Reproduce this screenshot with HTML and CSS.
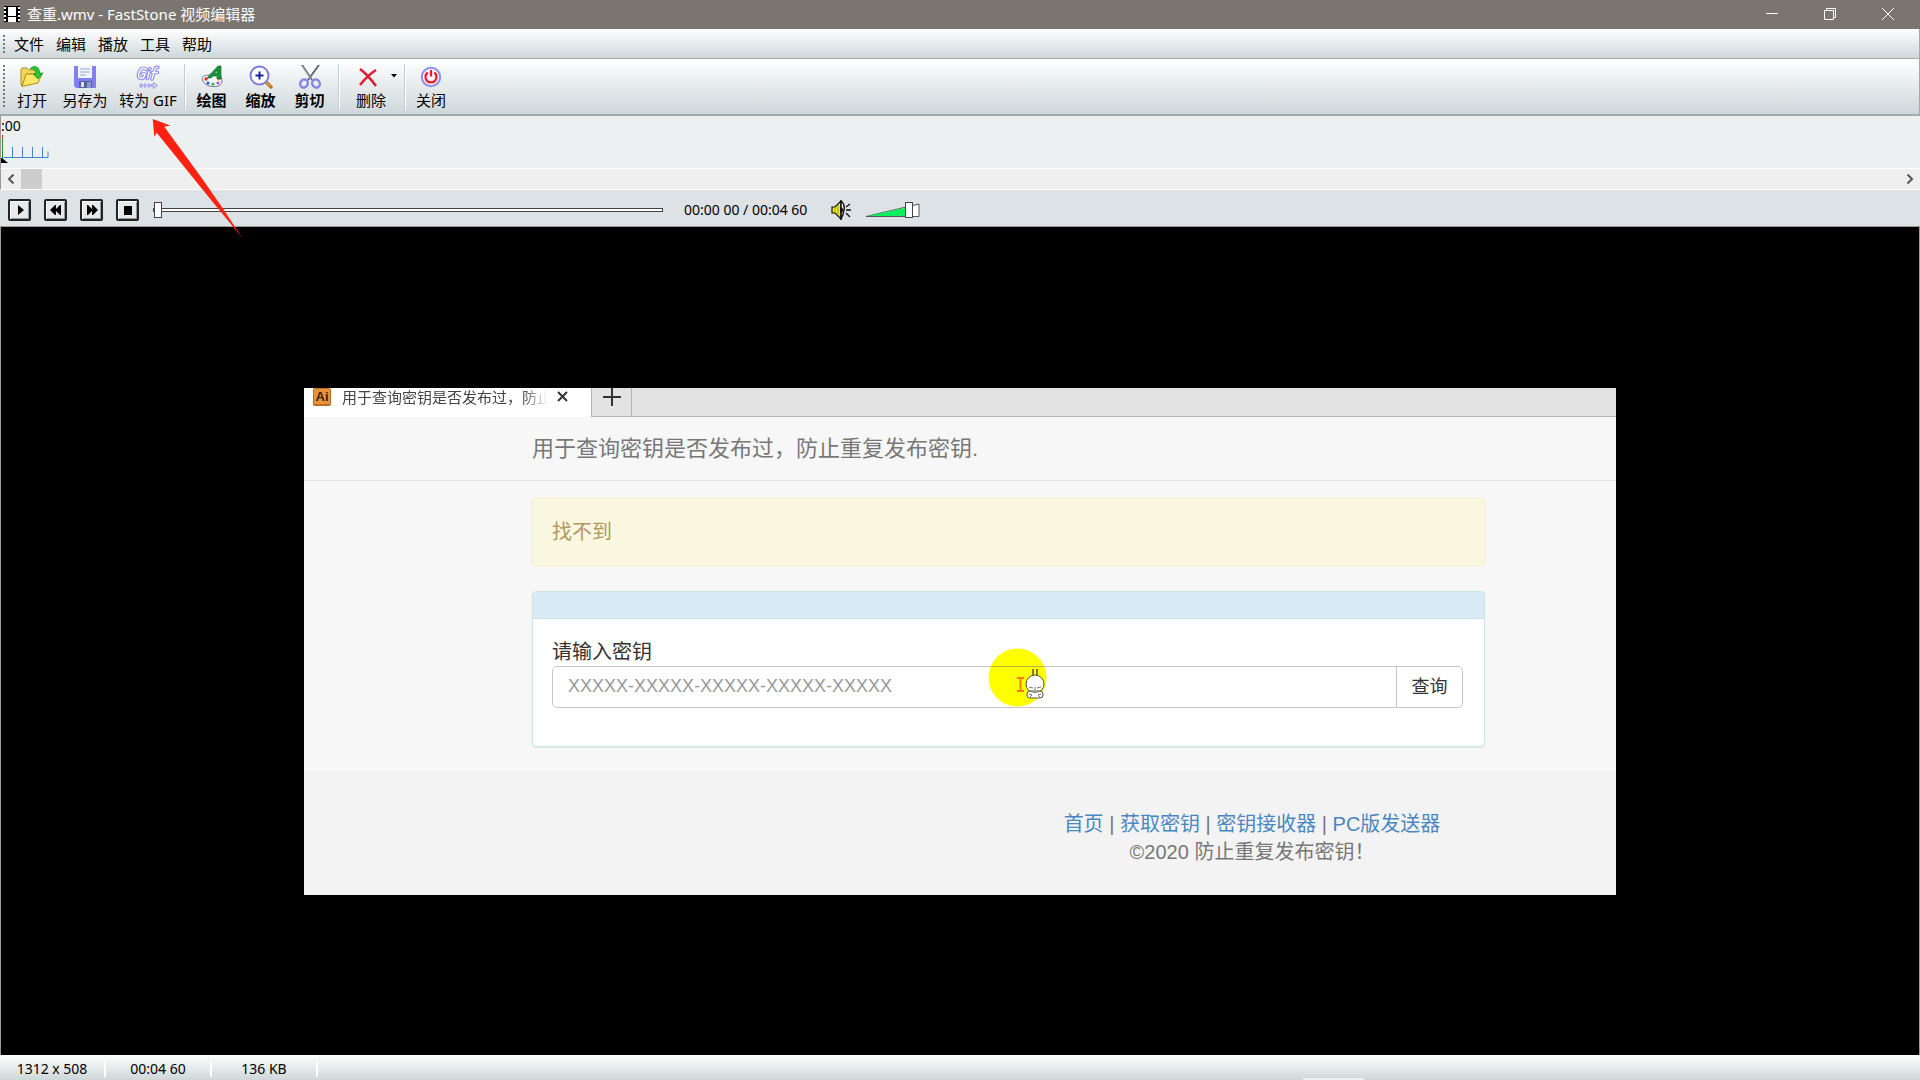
FILE: index.html
```html
<!DOCTYPE html>
<html lang="zh-CN">
<head>
    <meta charset="UTF-8">
    <meta name="viewport" content="width=device-width, initial-scale=1.0">
    <title>查重.wmv - FastStone 视频编辑器</title>
    <link rel="stylesheet" href="styles.css">
</head>
<body>
    <header class="titlebar">
        <svg class="app-icon" width="16" height="16" viewBox="0 0 16 16">
            <path d="M0 0h16v16H0z" fill="#000"/>
            <path d="M4 1h8v9H4zM4 11h8v5H4z" fill="#fff"/>
            <path d="M1 1v15M15 1v15" stroke="#fff" stroke-width="2" stroke-dasharray="2 2"/>
        </svg>
        <h1>查重.wmv - FastStone 视频编辑器</h1>
        <div class="window-buttons">
            <button type="button" aria-label="最小化"><svg width="12" height="12" viewBox="0 0 12 12"><path d="M0 5.5h12"/></svg></button>
            <button type="button" aria-label="还原"><svg width="12" height="12" viewBox="0 0 12 12"><path d="M.5 2.5h9v9h-9zM2.5 2V.5h9v9H10"/></svg></button>
            <button type="button" aria-label="关闭窗口"><svg width="12" height="12" viewBox="0 0 12 12"><path d="M0 0l12 12M12 0L0 12"/></svg></button>
        </div>
    </header>

    <nav class="menubar">
        <button type="button">文件</button>
        <button type="button">编辑</button>
        <button type="button">播放</button>
        <button type="button">工具</button>
        <button type="button">帮助</button>
    </nav>

    <div class="toolbar">
        <button type="button" class="tool tool-open">
            <svg width="24" height="24" viewBox="0 0 24 24">
                <path d="M1 5l1-2h5l2 2h8v4H7L2 21l-1-2z" fill="#f3d75b" stroke="#a98a1c"/>
                <path d="M2 21.500L6 9h16l-4 9z" fill="#ffe566" stroke="#b08d18"/>
                <path d="M10 4c4-5 10-2 9.500 4H23l-5 6-5-5h2.500C16 5 13 3 10 4z" fill="#1fc934" stroke="#158a20" stroke-width=".7"/>
            </svg>
            打开
        </button>
        <button type="button" class="tool tool-save">
            <svg width="24" height="24" viewBox="0 0 24 24">
                <path d="M1 1h22v22H3l-2-2z" fill="#8080ee"/>
                <path d="M5 1h14v12H5z" fill="#f2f6fc"/>
                <path d="M7 4h10M7 7h10M7 10h6" stroke="#9aa6c4"/>
                <path d="M6 16h13v7H6z" fill="#59639e"/>
                <path d="M8 17h3v5H8z" fill="#d8def4"/>
                <path d="M14 17h4v6h-4z" fill="#8d97cc"/>
            </svg>
            另存为
        </button>
        <button type="button" class="tool tool-gif">
            <svg width="24" height="24" viewBox="0 0 24 24">
                <g fill="none" stroke-linecap="round" stroke-linejoin="round">
                    <path d="M10.500 4.500Q5 1 3 7.500Q1 14 6 13.500Q8 13.500 9 9H6.500M13 7l-1.500 6.500M14 3.500v.2M16 14l3-10q.6-2 3-1.500M16.500 7.500h5" stroke="#8b8bf3" stroke-width="3.600"/>
                    <path d="M10.500 4.500Q5 1 3 7.500Q1 14 6 13.500Q8 13.500 9 9H6.500M13 7l-1.500 6.500M14 3.500v.2M16 14l3-10q.6-2 3-1.500M16.500 7.500h5" stroke="#fff" stroke-width="1.400"/>
                </g>
                <path d="M4 19h2v3H4zM8 19h2v3H8zM12 19h2v3h-2zM15.500 19.500h2v-2l4 3-4 3v-2h-2z" fill="#d8d8ff" stroke="#8b8bf3" stroke-width=".8"/>
            </svg>
            转为 GIF
        </button>
        <span class="tool-sep"></span>
        <button type="button" class="tool tool-draw">
            <svg width="24" height="24" viewBox="0 0 24 24">
                <path d="M2 14q0-4 8-4h10q2 2 2 6 0 6-9 5.500Q4 21 2 14z" fill="#f8f8fc" stroke="#77779c"/>
                <circle cx="6" cy="14" r="1.700" fill="#e52b2b"/><circle cx="8" cy="18" r="1.600" fill="#2a55e8"/>
                <circle cx="13" cy="19" r="1.600" fill="#27b943"/><circle cx="18" cy="18" r="1.600" fill="#d447e6"/><circle cx="19" cy="14" r="1.500" fill="#f0a032"/>
                <path d="M7 13L18 1h3v13h-4v-3h-4l-2 2zM14.500 8.500H17V5z" fill="#17963a" fill-rule="evenodd" stroke="#0d5a24" stroke-width=".6"/>
            </svg>
            绘图
        </button>
        <button type="button" class="tool tool-zoom">
            <svg width="24" height="24" viewBox="0 0 24 24">
                <path d="M17 17l5 5" stroke="#bd792b" stroke-width="3.500" stroke-linecap="round"/>
                <path d="M17 17l4 4" stroke="#f2bd66"/>
                <circle cx="10.500" cy="10.500" r="9" fill="#fdfdff" stroke="#7c7cdd" stroke-width="2"/>
                <path d="M6.500 10.500h8M10.500 6.500v8" stroke="#1f2192" stroke-width="2"/>
            </svg>
            缩放
        </button>
        <button type="button" class="tool tool-cut">
            <svg width="24" height="24" viewBox="0 0 24 24">
                <path d="M4 0l10 15M21 0L10 15" stroke="#666b70" stroke-width="2"/>
                <path d="M4 1l9 13" stroke="#c5cbd0" stroke-width=".7"/>
                <g fill="none" stroke="#8585e5" stroke-width="2.400"><ellipse cx="6" cy="18.500" rx="3.700" ry="4.200" transform="rotate(30 6 18.500)"/><ellipse cx="18" cy="18.500" rx="3.700" ry="4.200" transform="rotate(-30 18 18.500)"/></g>
            </svg>
            剪切
        </button>
        <span class="tool-sep"></span>
        <button type="button" class="tool tool-delete">
            <svg width="24" height="24" viewBox="0 0 24 24">
                <path d="M1 4q7 5 16 17M17 5Q9 10 1 20" fill="none" stroke="#e21b35" stroke-width="2.600"/>
            </svg>
            删除
        </button>
        <button type="button" class="drop" aria-label="删除选项"><svg width="6" height="4" viewBox="0 0 6 4"><path d="M0 0h6L3 3.500z"/></svg></button>
        <span class="tool-sep"></span>
        <button type="button" class="tool tool-close">
            <svg width="24" height="24" viewBox="0 0 24 24">
                <circle cx="12" cy="12" r="9.200" fill="#f6f3ff" stroke="#8d8dea" stroke-width="2"/>
                <path d="M8.800 7.500a5.500 5.500 0 1 0 6.400 0M12 5v6.500" fill="none" stroke="#f31a24" stroke-width="2.200"/>
            </svg>
            关闭
        </button>
    </div>

    <section class="timeline">
        <span class="mark">:00</span>
        <svg width="50" height="30" viewBox="0 0 50 30">
            <path d="M2.500 22.500h44.500v-6M11.500 22v-10M21.500 22v-10M31.500 22v-10M41.500 22v-10" fill="none" stroke="#4385cb"/>
            <path d="M1.500 2v21" stroke="#2c8b2f"/>
            <path d="M1.500 0v3" stroke="#ef1f1f"/>
            <path d="M0 23h1l6 5H0z" fill="#000"/>
        </svg>
    </section>
    <div class="scrollbar">
        <button type="button" aria-label="向左滚动"><svg width="8" height="10" viewBox="0 0 8 10"><path d="M6.500.5L2 5l4.500 4.500"/></svg></button>
        <span class="scroll-thumb"></span>
        <button type="button" class="scroll-right" aria-label="向右滚动"><svg width="8" height="10" viewBox="0 0 8 10"><path d="M1.500.5L6 5 1.500 9.500"/></svg></button>
    </div>

    <section class="controls">
        <div class="play-buttons">
            <button type="button" aria-label="播放"><svg width="14" height="12" viewBox="0 0 14 12"><path d="M5 1l6 5-6 5z"/></svg></button>
            <button type="button" aria-label="后退"><svg width="14" height="12" viewBox="0 0 14 12"><path d="M7 1v4l4-4h1v10h-1L7 7v4H6L1 6l5-5z"/></svg></button>
            <button type="button" aria-label="前进"><svg width="14" height="12" viewBox="0 0 14 12"><path d="M7 1v4L3 1H2v10h1l4-4v4h1l5-5-5-5z"/></svg></button>
            <button type="button" aria-label="停止"><svg width="14" height="12" viewBox="0 0 14 12"><path d="M3 2h8v9H3z"/></svg></button>
        </div>
        <input class="seek" type="range" min="0" max="460" value="0" aria-label="播放进度">
        <span class="time">00:00 00 / 00:04 60</span>
        <button type="button" class="mute" aria-label="静音">
            <svg width="20" height="20" viewBox="0 0 20 20">
                <path d="M1 7h3l6-6v18l-6-6H1z" fill="#eaea2f" stroke="#111" stroke-width="1.200"/>
                <path d="M4 7v6M7 5v10" stroke="#a49d16"/>
                <path d="M10 1q4 3 3 9t-3 9z" fill="#fff" stroke="#111" stroke-width="1.500"/>
                <path d="M9 7q3 0 3 3t-3 3z" fill="#111"/>
                <path d="M15 7l4-3M15 10h5M15 13l4 4" stroke="#111" stroke-width="1.300"/>
            </svg>
        </button>
        <div class="volume">
            <svg width="54" height="16" viewBox="0 0 54 16">
                <path d="M0 14.500L53 2v12.500z" fill="#fff" stroke="#555"/>
                <path d="M2 14L40 5.500V14z" fill="#0cf060"/>
            </svg>
            <input type="range" min="0" max="100" value="85" aria-label="音量">
        </div>
    </section>

    <main class="viewer">
        <div class="frame">
            <div class="tabs">
                <div class="tab">
                    <svg width="18" height="18" viewBox="0 0 18 18">
                        <rect width="18" height="18" rx="2" fill="#b96c26"/>
                        <rect x="1" y="1" width="16" height="15" fill="#e8933b"/>
                        <text x="9" y="13" text-anchor="middle" class="ai">Ai</text>
                    </svg>
                    <span class="tab-title">用于查询密钥是否发布过，防止</span>
                    <button type="button" aria-label="关闭标签"><svg width="11" height="11" viewBox="0 0 11 11"><path d="M1 1l9 9M10 1l-9 9" stroke="#333" stroke-width="2"/></svg></button>
                </div>
                <button type="button" class="new-tab" aria-label="新标签"><svg width="18" height="18" viewBox="0 0 18 18"><path d="M9 0v18M0 9h18" stroke="#333" stroke-width="2"/></svg></button>
            </div>
            <div class="navbar">用于查询密钥是否发布过，防止重复发布密钥.</div>
            <div class="content">
                <div class="alert">找不到</div>
                <div class="panel">
                    <div class="panel-heading"></div>
                    <form class="panel-body">
                        <label for="key">请输入密钥</label>
                        <div class="input-group">
                            <input id="key" type="text" placeholder="XXXXX-XXXXX-XXXXX-XXXXX-XXXXX">
                            <button type="button">查询</button>
                            <svg class="pointer" width="60" height="60" viewBox="0 0 60 60">
                                <circle cx="29.500" cy="29.500" r="29" fill="#ff0"/>
                                <path d="M3 18.500h53" stroke="#b7b72c"/>
                                <path d="M29 30h7M29 43h7M32.500 30v13" stroke="#f57c1a" stroke-width="2"/>
                                <path d="M45 28v-7M49 28v-7" stroke="#555" stroke-width="1.500"/>
                                <circle cx="47" cy="36" r="9" fill="#fff" stroke="#55553a"/>
                                <rect x="39" y="43" width="16" height="7" rx="3" fill="#fff" stroke="#55553a"/>
                                <path d="M41 39l4 1M53 39l-4 1M47 39v3M40 43q7 3 14 0M41 46l3 1-2 2M53 46l-3 1 2 2" fill="none" stroke="#777"/>
                            </svg>
                        </div>
                    </form>
                </div>
            </div>
            <div class="footer">
                <p><a href="#">首页</a> | <a href="#">获取密钥</a> | <a href="#">密钥接收器</a> | <a href="#">PC版发送器</a></p>
                <p>©2020 防止重复发布密钥！</p>
            </div>
        </div>
    </main>

    <footer class="statusbar">
        <span>1312 x 508</span>
        <span>00:04 60</span>
        <span>136 KB</span>
        <i class="status-chip"></i>
    </footer>

    <svg class="arrow" width="92" height="121" viewBox="0 0 92 121">
        <path d="M.7 1l17.600 6.500-6 1.200L49.700 60l20 28.700 20.500 31L66 90.500 42 61 4.700 14.700l-2.400 4z" fill="#ff2112"/>
    </svg>
</body>
</html>
```

FILE: styles.css
```css
* {
    box-sizing: border-box;
}
body {
    margin: 0;
    min-height: 100vh;
    display: flex;
    flex-direction: column;
    font: 15px/20px "Noto Sans", "Noto Sans CJK SC", sans-serif;
    color: #000;
    background: #000;
}
button {
    font: inherit;
    color: inherit;
    background: none;
    border: none;
    padding: 0;
    display: flex;
    align-items: center;
    justify-content: center;
}
svg {
    display: block;
    flex: none;
}
.titlebar {
    display: flex;
    align-items: center;
    gap: 7px;
    height: 29px;
    padding: 0 3px 2px 4px;
    background: #7b7570;
    color: #fff;
}
.titlebar h1 {
    margin: 0;
    font-size: 15px;
    font-weight: normal;
}
.window-buttons {
    display: flex;
    margin-left: auto;
}
.window-buttons button {
    width: 58px;
    height: 27px;
}
.window-buttons path {
    fill: none;
    stroke: #fff;
}
.menubar,
.toolbar {
    display: flex;
    background: linear-gradient(#fff, #ced7da);
    border-bottom: 1px solid #a6a8aa;
    border-right: 1px solid #a6a8aa;
}
.menubar::before,
.toolbar::before {
    content: "";
    width: 2px;
    margin: 6px 9px 5px 3px;
    background: repeating-linear-gradient(#777 0 2px, transparent 2px 4px);
}
.menubar {
    height: 30px;
    gap: 12px;
}
.menubar::before {
    margin-right: -3px;
}
.toolbar {
    height: 57px;
    border-bottom-width: 2px;
}
.tool {
    flex-direction: column;
    justify-content: flex-start;
    gap: 1px;
    padding-top: 6px;
    white-space: nowrap;
}
.tool-open {
    width: 36px;
}
.tool-save {
    width: 70px;
}
.tool-gif {
    width: 56px;
    margin-right: 4px;
}
.tool-draw,
.tool-zoom,
.tool-cut {
    width: 49px;
    font-weight: bold;
}
.tool-delete {
    width: 46px;
    padding-left: 14px;
}
.tool-close {
    width: 48px;
}
.tool-sep {
    width: 2px;
    margin: 5px 1px 4px 4px;
    background: #fff;
    border-left: 1px solid #c3ced3;
}
.drop {
    width: 13px;
    height: 34px;
}
.timeline {
    height: 52px;
    background: #ecf0f1;
    border-left: 1px solid #999;
}
.mark {
    display: block;
    font-size: 14px;
    line-height: 19px;
}
.scrollbar {
    display: flex;
    height: 22px;
    background: #efefef;
    border-top: 1px solid #fff;
    border-bottom: 1px solid #fff;
    border-left: 1px solid #999;
}
.scrollbar button {
    width: 20px;
}
.scrollbar path {
    fill: none;
    stroke: #555;
    stroke-width: 2;
}
.scroll-thumb {
    width: 21px;
    background: #cdcdcd;
}
.scrollbar .scroll-right {
    margin-left: auto;
}
.controls {
    display: flex;
    align-items: center;
    height: 37px;
    padding: 3px 0 0 8px;
    background: #dde2e6;
    border-bottom: 1px solid #999;
}
.play-buttons {
    display: flex;
    gap: 13px;
}
.play-buttons button {
    width: 23px;
    height: 22px;
    border: 2px solid #222;
    border-radius: 2px;
    box-shadow: inset 1px 1px #fff, inset -1px -1px #999;
    background: #e6e9ec;
}
input[type="range"] {
    appearance: none;
    margin: 0;
    height: 16px;
    background: none;
}
input[type="range"]::-webkit-slider-thumb {
    appearance: none;
    width: 8px;
    height: 16px;
    background: #fff;
    border: 1px solid #444;
}
.controls .seek {
    width: 510px;
    margin: 0 21px 0 14px;
}
.seek::-webkit-slider-runnable-track {
    height: 4px;
    background: #fff;
    border: 1px solid #444;
}
input.seek::-webkit-slider-thumb {
    margin-top: -7px;
}
.time {
    width: 127px;
    font-size: 14px;
}
.mute {
    margin: 0 15px 0 20px;
}
.volume {
    position: relative;
}
.volume input {
    position: absolute;
    left: 0;
    top: 0;
    width: 54px;
}
.viewer {
    flex: 1;
    display: flex;
    align-items: center;
    justify-content: center;
    border-left: 1px solid #999;
    border-right: 1px solid #999;
}
.frame {
    width: 100%;
    max-width: 1312px;
    background: #f7f7f7;
    font-family: "Liberation Sans", "Noto Sans CJK SC", sans-serif;
    font-size: 20px;
    line-height: 28px;
}
.tabs {
    display: flex;
    height: 29px;
    background: #e3e3e3;
    border-bottom: 1px solid #b4b4b4;
}
.tab {
    display: flex;
    align-items: flex-start;
    width: 287px;
    height: 29px;
    padding-left: 9px;
    background: #fff;
    font-size: 15px;
    line-height: 20px;
}
.ai {
    font: bold 13px "Liberation Sans", sans-serif;
    fill: #3c220b;
}
.tab-title {
    margin: 0 5px 0 11px;
    white-space: nowrap;
    color: #444;
    -webkit-mask-image: linear-gradient(to right, #000 86%, transparent 98%);
}
.tab button {
    height: 18px;
}
.new-tab {
    width: 41px;
    height: 28px;
    padding-bottom: 10px;
    border-left: 1px solid #b4b4b4;
    border-right: 1px solid #b4b4b4;
}
.navbar {
    height: 64px;
    padding: 18px 0 0 228px;
    font-size: 22px;
    color: #777;
    border-bottom: 1px solid #e4e4e4;
}
.content {
    padding: 17px 131px 24px 228px;
}
.alert {
    padding: 19px;
    margin-bottom: 25px;
    background: #faf7e0;
    border: 1px solid #f5efcc;
    border-radius: 4px;
    color: #b3985f;
}
.panel {
    background: #fff;
    border: 1px solid #c9e4e6;
    border-radius: 4px;
    box-shadow: 0 1px 1px #dfeaea;
}
.panel-heading {
    height: 27px;
    background: #d9ebf4;
    border-bottom: 1px solid #c4e3e8;
}
.panel-body {
    padding: 19px 21px 38px 19px;
}
.panel-body label {
    display: block;
    color: #333;
}
.input-group {
    position: relative;
    display: flex;
    height: 42px;
    border: 1px solid #c5c5c5;
    border-radius: 5px;
}
.input-group input {
    flex: 1;
    min-width: 0;
    padding: 0 15px;
    border: none;
    border-right: 1px solid #c5c5c5;
    border-radius: 5px 0 0 5px;
    font: 18px "Liberation Sans", sans-serif;
}
.input-group input::placeholder {
    color: #999;
}
.input-group button {
    width: 65px;
    font-size: 18px;
    color: #333;
}
.pointer {
    position: absolute;
    left: 435px;
    top: -19px;
}
.footer {
    padding: 39px 0 29px 584px;
    background: #f3f3f3;
    color: #777;
    text-align: center;
}
.footer p {
    margin: 0;
}
.footer a {
    color: #4a87c0;
    text-decoration: none;
}
.statusbar {
    position: relative;
    display: flex;
    height: 25px;
    background: linear-gradient(#fff, #ced7d8);
}
.statusbar span {
    width: 106px;
    margin: 7px 0 3px;
    border-right: 2px solid #fff;
    text-align: center;
    font-size: 14px;
    line-height: 14px;
}
.status-chip {
    position: absolute;
    left: 1303px;
    bottom: 0;
    width: 61px;
    height: 2px;
    background: #eef0f1;
}
.arrow {
    position: absolute;
    left: 152px;
    top: 118px;
}
```
